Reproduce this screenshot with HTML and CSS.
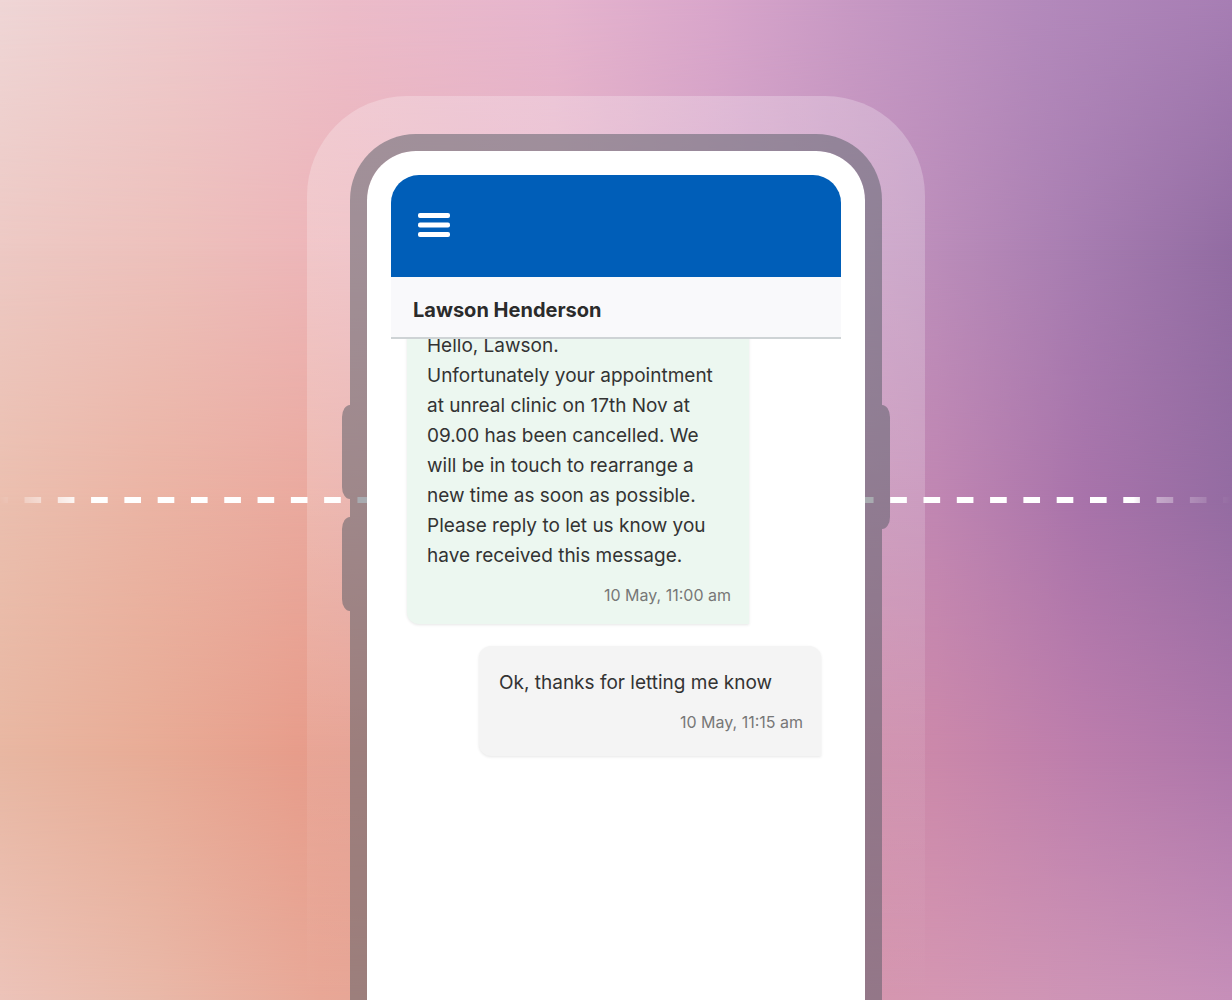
FILE: index.html
```html
<!DOCTYPE html>
<html lang="en">
<head>
<meta charset="utf-8">
<meta name="viewport" content="width=device-width, initial-scale=1">
<title>Messages</title>
<link rel="stylesheet" href="styles.css">
</head>
<body>
<main class="stage">
  <div class="backdrop" aria-hidden="true">
    <div class="band band-1"></div>
    <div class="band band-2"></div>
    <div class="band band-3"></div>
    <div class="band band-4"></div>
    <div class="band band-5"></div>
  </div>
  <div class="halo" aria-hidden="true"></div>
  <div class="trail" aria-hidden="true"></div>
  <div class="phone">
    <span class="key key-up"></span>
    <span class="key key-down"></span>
    <span class="key key-power"></span>
    <section class="screen">
      <header class="app-bar">
        <button class="menu" type="button" aria-label="Menu">
          <svg width="32" height="24" viewBox="0 0 32 24" aria-hidden="true">
            <rect width="32" height="5" rx="2" y="0"/>
            <rect width="32" height="5" rx="2" y="9.5"/>
            <rect width="32" height="5" rx="2" y="19"/>
          </svg>
        </button>
      </header>
      <h1 class="contact">Lawson Henderson</h1>
      <div class="thread">
        <article class="bubble received">
          <p class="message">Hello, Lawson.<br>Unfortunately your appointment<br>at unreal clinic on 17th Nov at<br>09.00 has been cancelled. We<br>will be in touch to rearrange a<br>new time as soon as possible.<br>Please reply to let us know you<br>have received this message.</p>
          <time class="time">10 May, 11:00 am</time>
        </article>
        <article class="bubble sent">
          <p class="message">Ok, thanks for letting me know</p>
          <time class="time">10 May, 11:15 am</time>
        </article>
      </div>
    </section>
  </div>
</main>
</body>
</html>
```
FILE: styles.css
```css
* { box-sizing: border-box; }

body {
  margin: 0;
  font-family: Inter, "Liberation Sans", sans-serif;
  color: #333;
}

.stage {
  --bezel: rgba(82, 88, 98, .5);
  display: grid;
  grid-template: minmax(100vh, auto) / minmax(0, 1fr);
  overflow: hidden;
}

.stage > * {
  grid-area: 1 / 1;
  z-index: 1;
}

/* Colour mesh: each band fades in over the one above it */
.stage > .backdrop {
  display: grid;
  z-index: 0;
}
.band { grid-area: 1 / 1; }
.band-1 { background: linear-gradient(90deg, #efd6d6, #eecacd 14%, #ecbcc9 28%, #e6b5ce 45%, #d9a6cb 58%, #c899c4 69%, #b48abc 84%, #a77eb4); }
.band-2 {
  background: linear-gradient(90deg, #edc9c4, #edc0bb 14%, #edb6b9 25%, #e6b0c4 45%, #d09fc5 60%, #bb8dba 76%, #a67cb0 88%, #926ca2);
  mask-image: linear-gradient(transparent, #000 25%);
}
.band-3 {
  background: linear-gradient(90deg, #ebbfaf, #ebb4a4 12%, #eaa99e 25%, #dc9eac 45%, #cb92b4 60%, #c086b2 76%, #a873aa 88%, #946ca2);
  mask-image: linear-gradient(transparent 25%, #000 50%);
}
.band-4 {
  background: linear-gradient(90deg, #e8b7a2, #e8ac96 12%, #e79d8b 24%, #dc9690 45%, #d08fa5 60%, #cb88aa 76%, #bc7dac 88%, #ad76aa);
  mask-image: linear-gradient(transparent 50%, #000 75%);
}
.band-5 {
  background: linear-gradient(90deg, #ecc3b9, #e9b9a9 12%, #e8a796 26%, #dea096 45%, #d898a8 60%, #d496b2 76%, #cd94b6 88%, #c68fb9);
  mask-image: linear-gradient(transparent 75%, #000);
}

.halo {
  width: 618px;
  max-width: 100%;
  justify-self: center;
  margin-top: 96px;
  border-radius: 100px 100px 0 0;
  background: linear-gradient(rgba(255, 255, 255, .25), rgba(255, 255, 255, .2) 40%, rgba(255, 255, 255, 0));
}

/* Dashed line, fading at both ends */
.trail {
  align-self: center;
  height: 6px;
  background: linear-gradient(90deg, #fff 25%, transparent 25% 75%, #fff 75%) 0 0 / calc(100% / 37) 100%;
  mask-image: linear-gradient(90deg, transparent, #000 7%, #000 92%, rgba(0, 0, 0, .4) 94%, transparent);
}

.phone {
  position: relative;
  width: 532px;
  max-width: 100%;
  justify-self: center;
  margin-top: 134px;
  padding: 24px 24px 0;
  border: 17px solid var(--bezel);
  border-bottom: 0;
  border-radius: 66px 66px 0 0;
  background: #fff padding-box;
}

.key {
  position: absolute;
  width: 8px;
  background: var(--bezel);
}
.key-up, .key-down { left: -25px; height: 94px; border-radius: 8px 0 0 8px / 12px 0 0 12px; }
.key-up { top: 254px; }
.key-down { top: 366px; }
.key-power { right: -25px; top: 254px; height: 124px; border-radius: 0 8px 8px 0 / 0 12px 12px 0; }

.screen {
  overflow: hidden;
  border-radius: 28px 28px 0 0;
}

.app-bar {
  display: flex;
  align-items: center;
  height: 102px;
  padding: 0 27px 2px;
  background: #005eb8;
}

.menu {
  display: flex;
  padding: 0;
  border: 0;
  background: none;
  fill: #fff;
}

.contact {
  margin: 0;
  padding: 19px 22px 13px;
  border-bottom: 2px solid #ced3d5;
  background: #f9f9fb;
  color: #2b2b2b;
  font-size: 20px;
  font-weight: 700;
  line-height: 28px;
}

.thread {
  display: flex;
  flex-direction: column;
  gap: 22px;
  overflow: hidden;
  padding: 0 20px 20px 16px;
}

.bubble {
  display: flex;
  flex-direction: column;
  gap: 12px;
  width: 342px;
  max-width: 100%;
  padding: 22px 18px 17px 20px;
  border-radius: 12px 12px 0 12px;
  box-shadow: 0 1px 3px rgba(0, 0, 0, .1);
}

/* The thread is scrolled, so the top of this message sits under the contact bar */
.received {
  margin-top: -30px;
  background: #ecf7f0;
}

.sent {
  align-self: flex-end;
  min-height: 110px;
  background: #f4f4f4;
}

.message {
  margin: 0;
  font-size: 19px;
  line-height: 30px;
  white-space: nowrap;
}

.time {
  align-self: flex-end;
  color: #777;
  font-size: 16px;
  line-height: 24px;
}
```
